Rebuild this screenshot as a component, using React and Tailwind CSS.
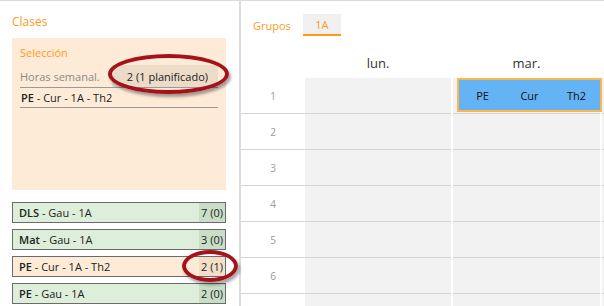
import React from "react";

const font = { fontFamily: '"Open Sans", "Liberation Sans", sans-serif' };

function ListRow({ name, rest, count, peach }) {
  return (
    <div
      className={`flex h-[21px] w-[214px] shrink-0 items-stretch border border-[#6b6b6b] text-[11px] text-[#222] ${
        peach ? "bg-[#fdebd7]" : "bg-[#ddeedb]"
      }`}
    >
      <div className="flex flex-1 items-center pl-[6px] leading-none">
        <span className="font-semibold">{name}</span>
        <span className="whitespace-pre">{rest}</span>
      </div>
      <div
        className={`flex w-[26px] items-center justify-end pr-[2px] leading-none ${
          peach ? "bg-[#f3dfc8]" : "bg-[#c9dec6]"
        }`}
      >
        {count}
      </div>
    </div>
  );
}

function Ellipse({ className }) {
  return (
    <div
      className={`pointer-events-none absolute rounded-[50%] border-[4px] border-[#a6121b] shadow-[2px_3px_3px_rgba(0,0,0,0.35)] ${className}`}
    />
  );
}

const rows = [1, 2, 3, 4, 5, 6, 7];

export default function App() {
  return (
    <div
      className="relative flex h-[306px] w-[604px] overflow-hidden bg-white"
      style={font}
    >
      {/* Left panel */}
      <div className="flex w-[240px] shrink-0 flex-col border-r border-t border-[#dcdcdc] px-[12px]">
        <div className="shrink-0 pt-[12px] text-[12px] leading-[17px] text-[#ff9a1a]">
          Clases
        </div>
        <div className="mt-[8px] h-[152px] w-[214px] shrink-0 bg-[#fdebd7] px-[8px] pt-[7px]">
          <div className="text-[11px] leading-[15px] text-[#ff9a1a]">
            Selección
          </div>
          <div className="mt-[5px] flex h-[23px] items-stretch border-b border-[#9a9a9a]">
            <div className="flex flex-1 items-center text-[11px] leading-none text-[#8a8a8a]">
              Horas semanal.
            </div>
            <div className="flex w-[106px] items-center justify-end bg-[#ebdbc7] pr-[10px] text-[11px] leading-none text-[#222]">
              2 (1 planificado)
            </div>
          </div>
          <div className="flex h-[20px] items-center border-b border-[#9a9a9a] pl-[1px] text-[11px] leading-none text-[#222]">
            <span className="font-semibold">PE</span>
            <span className="whitespace-pre"> - Cur - 1A - Th2</span>
          </div>
        </div>
        <div className="mt-[12px] flex shrink-0 flex-col gap-[6px]">
          <ListRow name="DLS" rest=" - Gau - 1A" count="7 (0)" />
          <ListRow name="Mat" rest=" - Gau - 1A" count="3 (0)" />
          <ListRow name="PE" rest=" - Cur - 1A - Th2" count="2 (1)" peach />
          <ListRow name="PE" rest=" - Gau - 1A" count="2 (0)" />
        </div>
      </div>

      {/* Right panel */}
      <div className="flex flex-1 flex-col border-l border-t border-[#dcdcdc]">
        <div className="flex h-[35px] shrink-0 items-end pl-[12px]">
          <div className="flex h-[22px] items-center pr-[12px] text-[11px] leading-none text-[#ff9a1a]">
            Grupos
          </div>
          <div className="flex h-[22px] w-[38px] items-center justify-center border-b-2 border-[#ff9a1a] bg-[#f0f0f0] text-[11px] leading-none text-[#ff9a1a]">
            1A
          </div>
        </div>
        <div className="mt-[12px] flex h-[30px] shrink-0">
          <div className="w-[64px] shrink-0" />
          <div className="flex w-[146px] shrink-0 items-center justify-center text-[13px] leading-none text-[#333]">
            lun.
          </div>
          <div className="ml-[2px] flex w-[147px] shrink-0 items-center justify-center text-[13px] leading-none text-[#333]">
            mar.
          </div>
        </div>
        <div className="flex shrink-0 flex-col">
          {rows.map((r) => (
            <div key={r} className="flex h-[36px] shrink-0">
              <div className="flex w-[64px] shrink-0 items-center justify-center border-b border-[#d4d4d4] text-[10px] leading-none text-[#9a9a9a]">
                {r < 7 ? r : ""}
              </div>
              <div className="w-[146px] shrink-0 border-b border-[#d4d4d4] bg-[#f2f2f2]" />
              <div className="relative ml-[2px] w-[147px] shrink-0 border-b border-[#d4d4d4] bg-[#f2f2f2]">
                {r === 1 && (
                  <div className="absolute left-[4px] top-0 z-10 flex h-[34px] w-[145px] items-center border-2 border-[#ffb547] bg-[#64b4f5] text-[11px] leading-none text-[#111]">
                    <div className="flex-1 text-center">PE</div>
                    <div className="flex-1 text-center">Cur</div>
                    <div className="flex-1 text-center">Th2</div>
                  </div>
                )}
              </div>
              <div className="ml-[2px] w-[146px] shrink-0 border-b border-[#d4d4d4] bg-[#f2f2f2]" />
            </div>
          ))}
        </div>
      </div>

      <Ellipse className="left-[108px] top-[54px] h-[40px] w-[121px]" />
      <Ellipse className="left-[182px] top-[250px] h-[32px] w-[56px]" />
    </div>
  );
}
